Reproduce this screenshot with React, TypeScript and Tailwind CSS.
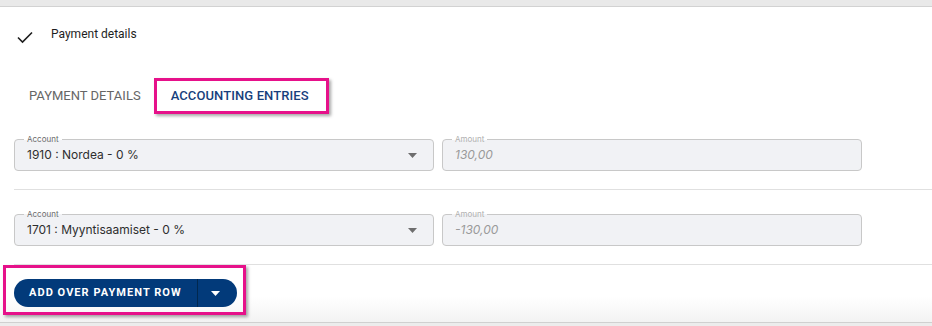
import type { ReactNode } from 'react';

type FieldProps = {
    label: string;
    value: string;
    select?: boolean;
    width: string;
};

function Field({ label, value, select, width }: FieldProps) {
    const muted = !select;
    return (
        <div className={`relative h-[32px] ${width} rounded-[4px] border border-[#c8c8c8] bg-[#f1f2f5] flex items-center pl-[12px] pr-[14px]`}>
            <span
                className={`absolute -top-[6px] left-[9px] px-[3px] text-[8px] leading-[10px] bg-[linear-gradient(to_bottom,#ffffff_55%,#f1f2f5_55%)] ${muted ? 'text-[#b0b0b0]' : 'text-[#6b6b6b]'}`}
            >
                {label}
            </span>
            <span
                className={`flex-1 text-[12px] ${muted ? 'italic text-[#9a9a9a]' : 'text-[#2e2e2e]'}`}
            >
                {value}
            </span>
            {select && (
                <svg width="9" height="5" viewBox="0 0 9 5" className="mr-[2px]">
                    <path d="M0 0 L9 0 L4.5 5 Z" fill="#6e6e6e" />
                </svg>
            )}
        </div>
    );
}

function Highlight({ children, className }: { children: ReactNode; className: string }) {
    return (
        <div className={`border-[3px] border-[#e6118a] shadow-[2px_2px_3px_rgba(0,0,0,0.35)] ${className}`}>
            {children}
        </div>
    );
}

const rows = [
    { account: '1910 : Nordea - 0 %', amount: '130,00' },
    { account: '1701 : Myyntisaamiset - 0 %', amount: '-130,00' },
];

export default function App() {
    return (
        <div className="w-[932px] h-[326px] bg-white overflow-hidden font-['Inter',sans-serif]">
            <div className="h-[7px] bg-[#e9e9e9] border-b border-[#d2d2d2]" />

            <div className="mt-[17px] h-[20px] flex items-center pl-[17px] font-['Roboto',sans-serif]">
                <svg width="16" height="13" viewBox="0 0 16 13" className="mt-[7px]">
                    <path d="M1 6.5 L5.5 11 L15 1.5" fill="none" stroke="#1e1e1e" strokeWidth="1.6" />
                </svg>
                <span className="ml-[18px] text-[12px] text-[#1e1e1e]">Payment details</span>
            </div>

            <div className="mt-[34px] h-[36px] flex items-stretch font-['Roboto',sans-serif] text-[13px]">
                <div className="pl-[29px] pr-[13px] flex items-center text-[#666666]">PAYMENT DETAILS</div>
                <Highlight className="flex items-center pl-[14px] pr-[17px] text-[#173f7d] font-medium tracking-[0.1px]">
                    ACCOUNTING ENTRIES
                </Highlight>
            </div>

            <div className="mt-[25px] flex flex-col">
                {rows.map((row, i) => (
                    <div key={row.account} className={i === 0 ? '' : 'mt-[24px]'}>
                        <div className="flex gap-[8px] pl-[14px]">
                            <Field label="Account" value={row.account} select width="w-[420px]" />
                            <Field label="Amount" value={row.amount} width="w-[420px]" />
                        </div>
                        <div className="mt-[18px] ml-[14px] h-px bg-[#e0e0e0]" />
                    </div>
                ))}
            </div>

            <div className="h-[57px] bg-gradient-to-b from-white from-[55%] to-[#f3f3f3]">
                <Highlight className="ml-[3px] w-[243px] h-[50px] pl-[8px] pt-[11px]">
                    <div className="w-[223px] h-[28px] rounded-full bg-[#023a7a] flex items-stretch font-['Roboto',sans-serif] text-white">
                        <div className="w-[183px] flex items-center pl-[15px] text-[11px] font-bold tracking-[1.05px]">
                            ADD OVER PAYMENT ROW
                        </div>
                        <div className="w-px bg-[#01284f]" />
                        <div className="flex-1 flex items-center justify-center pr-[4px]">
                            <svg width="9" height="5" viewBox="0 0 9 5">
                                <path d="M0 0 L9 0 L4.5 5 Z" fill="#ffffff" />
                            </svg>
                        </div>
                    </div>
                </Highlight>
            </div>
            <div className="h-[4px] bg-[#ececec] border-t border-[#d0d0d0]" />
        </div>
    );
}
